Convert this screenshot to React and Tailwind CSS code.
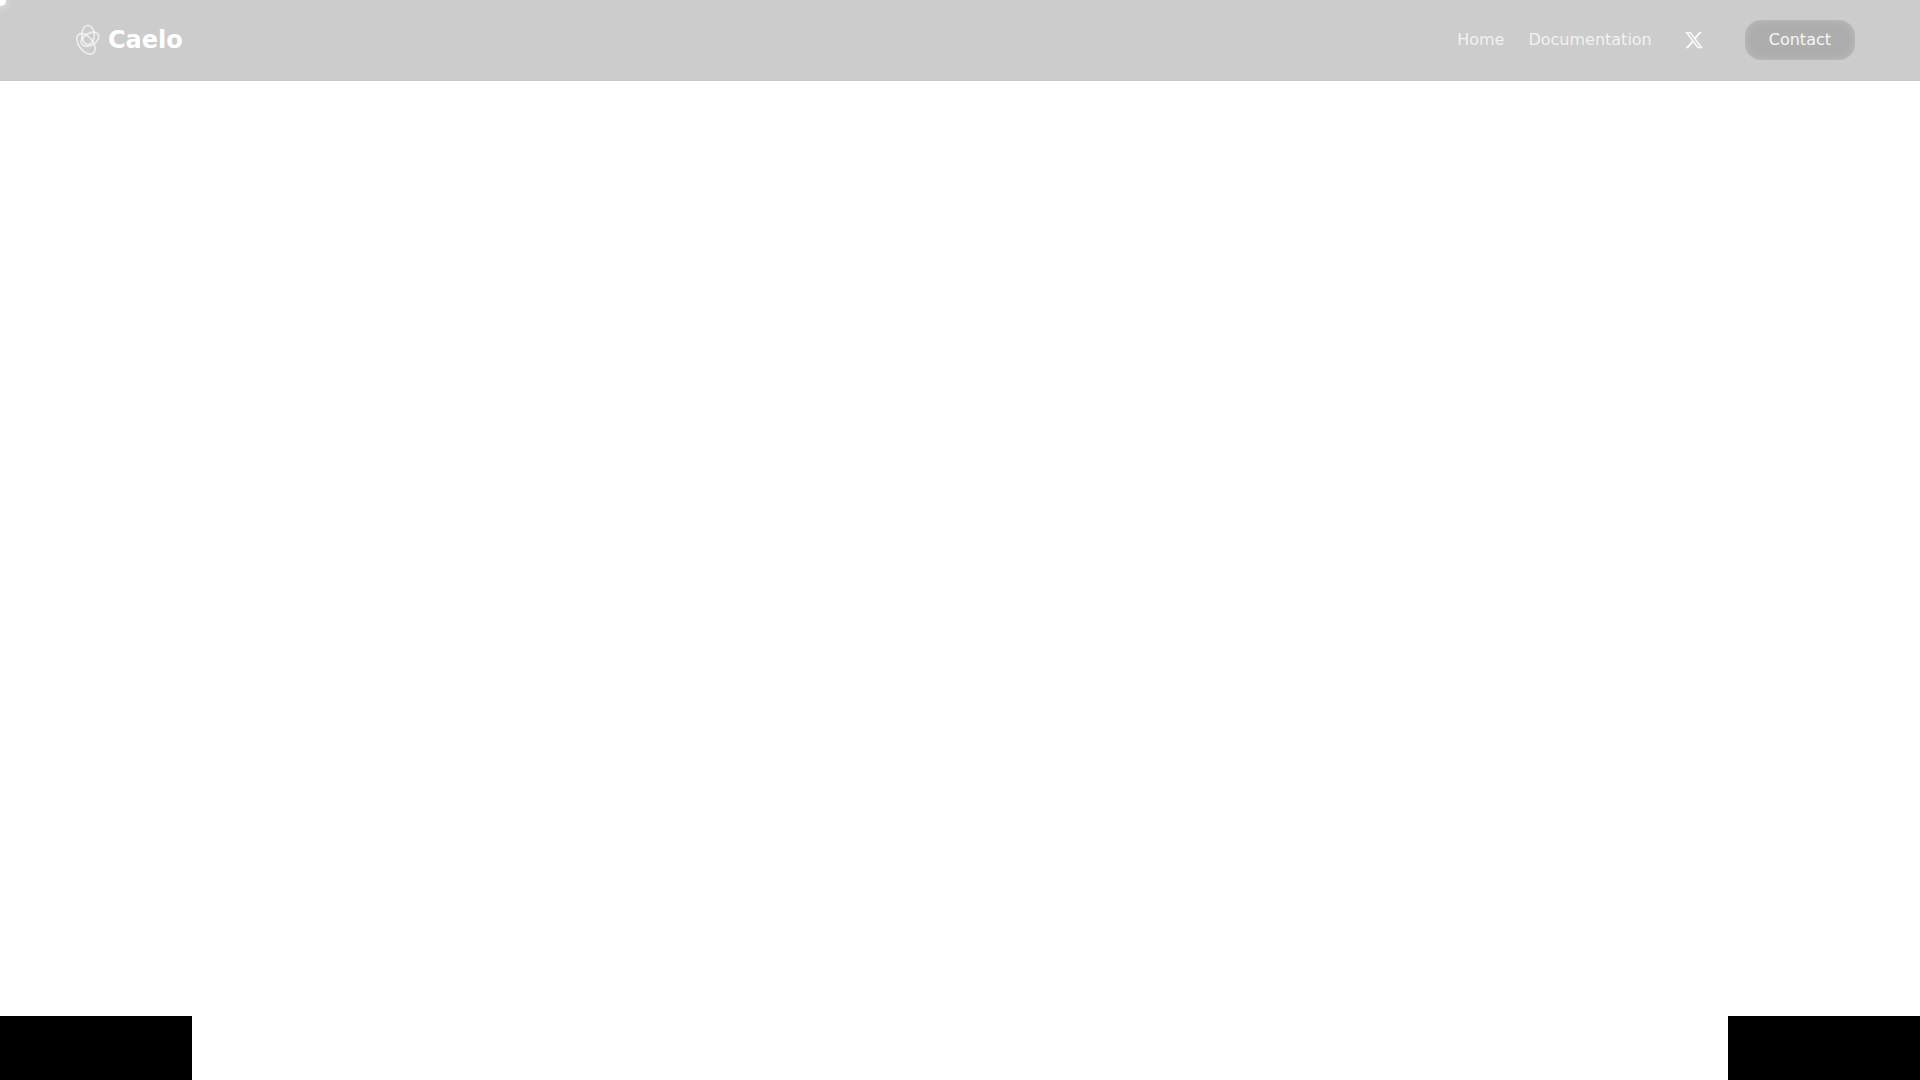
const navLinks = [
  { name: 'Home', link: '#' },
  { name: 'Documentation', link: '#' },
];

const Logo = () => (
  <svg className="w-6 h-8" viewBox="0 0 24 32" fill="none" stroke="currentColor" strokeWidth={1.8} strokeOpacity={0.6} aria-hidden="true">
    <ellipse cx="12" cy="11" rx="6.3" ry="9.6" />
    <ellipse cx="14" cy="15.3" rx="9.5" ry="6" transform="rotate(-30 14 15.3)" />
    <ellipse cx="10" cy="19.8" rx="11.8" ry="7" transform="rotate(52 10 19.8)" />
  </svg>
);

const XIcon = () => (
  <svg className="size-5" viewBox="0 0 24 24" fill="currentColor" aria-hidden="true">
    <path d="M18.244 2.25h3.308l-7.227 8.26 8.502 11.24H16.17l-5.214-6.817L4.99 21.75H1.68l7.73-8.835L1.254 2.25H8.08l4.713 6.231zm-1.161 17.52h1.833L7.084 4.126H5.117z" />
  </svg>
);

const Header = () => (
  <header className="flex items-center justify-between px-16 py-5 bg-black/20 border-b border-black/1">
    <a href="#" className="flex items-center gap-2 ml-3 text-white">
      <Logo />
      <span className="text-2xl font-bold">Caelo</span>
    </a>

    <nav className="flex items-center gap-6 text-white/75">
      {navLinks.map((item) => (
        <a key={item.name} href={item.link} className="hover:text-white transition-colors">
          {item.name}
        </a>
      ))}
      <a href="#" aria-label="X" className="p-2 mr-2 text-white/85">
        <XIcon />
      </a>
      <button className="h-10 mx-px px-6 rounded-2xl bg-black/15 text-white/90 shadow-[inset_0_0_10px_rgba(255,255,255,0.2)]">
        Contact
      </button>
    </nav>
  </header>
);

export default function App() {
  return (
    <div className="min-h-screen flex flex-col bg-white font-['DejaVu_Sans',sans-serif] text-base">
      {/* Cursor glow */}
      <div className="fixed -top-1 -left-1 z-10 size-[10px] rounded-full bg-white shadow-[0_0_10px_rgba(255,255,255,0.8)] pointer-events-none" />
      <Header />
      <main className="flex-1" />
      <div className="flex justify-between h-16">
        <div className="w-[10%] bg-black" />
        <div className="w-[10%] bg-black" />
      </div>
    </div>
  );
}
